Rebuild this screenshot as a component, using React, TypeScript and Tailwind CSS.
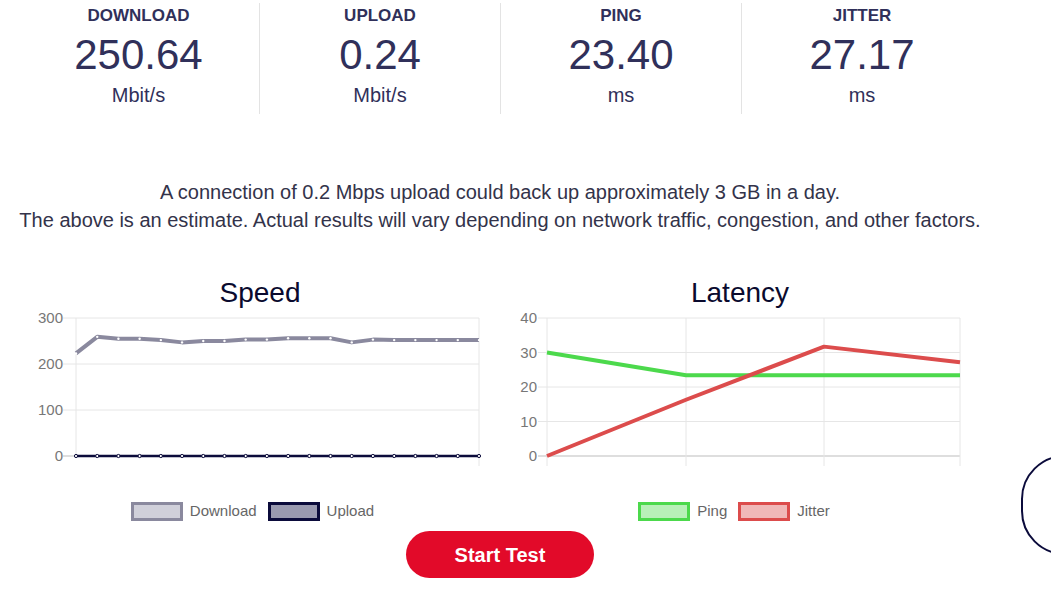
import React from "react";

const stats = [
  { label: "DOWNLOAD", value: "250.64", unit: "Mbit/s" },
  { label: "UPLOAD", value: "0.24", unit: "Mbit/s" },
  { label: "PING", value: "23.40", unit: "ms" },
  { label: "JITTER", value: "27.17", unit: "ms" },
];

const download = [223, 259, 255, 255, 252, 247, 250, 250, 253, 253, 256, 256, 256, 247, 253, 252, 252, 252, 252, 252];

function SpeedChart() {
  const left = 56;
  const right = 459;
  const step = (right - left) / (download.length - 1);
  const y = (v: number) => 146 - v * 0.46;
  const dl = download.map((v, i) => `${left + i * step},${y(v)}`).join(" ");
  const ul = download.map((_, i) => `${left + i * step},${y(0)}`).join(" ");
  return (
    <svg width="480" height="160" className="block">
      {[0, 100, 200, 300].map((t) => (
        <g key={t}>
          <line x1={43} x2={right} y1={y(t)} y2={y(t)} stroke={t === 0 ? "#bdbdbd" : "#e6e6e6"} strokeWidth="1" />
          <text x={43} y={y(t) + 5} textAnchor="end" fontSize="15" fill="#777" fontFamily="Liberation Sans, Arial, sans-serif">
            {t}
          </text>
        </g>
      ))}
      <line x1={left} x2={left} y1={8} y2={146} stroke="#e6e6e6" />
      <line x1={right} x2={right} y1={8} y2={156} stroke="#e6e6e6" />
      <polyline points={dl} fill="none" stroke="#8a899e" strokeWidth="4" strokeLinejoin="round" />
      {download.map((v, i) => (
        <circle key={i} cx={left + i * step} cy={y(v)} r="1.2" fill="#fff" />
      ))}
      <polyline points={ul} fill="none" stroke="#0b0b3b" strokeWidth="2.5" />
      {download.map((_, i) => (
        <circle key={i} cx={left + i * step} cy={y(0)} r="1.6" fill="#fff" stroke="#0b0b3b" strokeWidth="1" />
      ))}
    </svg>
  );
}

function LatencyChart() {
  const xs = [47, 186, 324, 460];
  const y = (v: number) => 146 - v * 3.45;
  const ping = [30, 23.4, 23.4, 23.4];
  const jitter = [0, 16.3, 31.7, 27.17];
  return (
    <svg width="480" height="160" className="block">
      {[0, 10, 20, 30, 40].map((t) => (
        <g key={t}>
          <line x1={38} x2={460} y1={y(t)} y2={y(t)} stroke={t === 0 ? "#bdbdbd" : "#e6e6e6"} strokeWidth="1" />
          <text x={37} y={y(t) + 5} textAnchor="end" fontSize="15" fill="#777" fontFamily="Liberation Sans, Arial, sans-serif">
            {t}
          </text>
        </g>
      ))}
      {xs.map((x) => (
        <line key={x} x1={x} x2={x} y1={8} y2={156} stroke="#e6e6e6" />
      ))}
      <polyline points={xs.map((x, i) => `${x},${y(ping[i])}`).join(" ")} fill="none" stroke="#4cd94c" strokeWidth="4" strokeLinejoin="round" />
      <polyline points={xs.map((x, i) => `${x},${y(jitter[i])}`).join(" ")} fill="none" stroke="#dc4c4c" strokeWidth="4" strokeLinejoin="round" />
    </svg>
  );
}

function Legend({ items }: { items: { label: string; border: string; fill: string }[] }) {
  return (
    <div className="flex items-center justify-center gap-[11px]">
      {items.map((it) => (
        <div key={it.label} className="flex items-center gap-[7px]">
          <span className="h-[19px] w-[52px] border-[3px]" style={{ borderColor: it.border, backgroundColor: it.fill }} />
          <span className="text-[15px] leading-5 text-[#666]">{it.label}</span>
        </div>
      ))}
    </div>
  );
}

export default function App() {
  return (
    <div className="relative h-[594px] w-full overflow-hidden bg-white font-['Liberation_Sans',Arial,sans-serif]">
      <div className="w-[1000px]">
        <div className="mt-[3px] grid grid-cols-4 px-[18px] text-[#30305a]">
          {stats.map((s, i) => (
            <div key={s.label} className={`flex h-[111px] flex-col items-center ${i > 0 ? "border-l border-[#e3e3e3]" : ""}`}>
              <div className="mt-[3px] text-[17px] font-bold leading-5">{s.label}</div>
              <div className="mt-[5px] text-[42px] leading-[48px]">{s.value}</div>
              <div className="mt-[4px] text-[20px] leading-6">{s.unit}</div>
            </div>
          ))}
        </div>

        <div className="mt-[64px] text-center text-[20px] leading-[28px] text-[#33334a]">
          <p>A connection of 0.2 Mbps upload could back up approximately 3 GB in a day.</p>
          <p>The above is an estimate. Actual results will vary depending on network traffic, congestion, and other factors.</p>
        </div>

        <div className="mt-[42px] flex px-[20px]">
          <div className="w-[480px]">
            <div className="text-center text-[28px] leading-[34px] text-[#0a0a2e]">Speed</div>
            <SpeedChart />
            <div className="mt-[31px] pr-[15px]">
              <Legend
                items={[
                  { label: "Download", border: "#8a899e", fill: "#d0d0da" },
                  { label: "Upload", border: "#0b0b3b", fill: "#9a9ab0" },
                ]}
              />
            </div>
          </div>
          <div className="w-[480px]">
            <div className="text-center text-[28px] leading-[34px] text-[#0a0a2e]">Latency</div>
            <LatencyChart />
            <div className="mt-[31px] pr-[12px]">
              <Legend
                items={[
                  { label: "Ping", border: "#4cd94c", fill: "#b8f0b8" },
                  { label: "Jitter", border: "#dc4c4c", fill: "#f0b8b8" },
                ]}
              />
            </div>
          </div>
        </div>

        <div className="mt-[10px] flex justify-center">
          <button type="button" className="h-[47px] w-[188px] rounded-full bg-[#e20a29] text-[20px] font-bold text-white">
            Start Test
          </button>
        </div>
      </div>

      <div className="absolute left-[1021px] top-[455px] h-[100px] w-[110px] rounded-[44px] border-2 border-[#0b0b3b]" />
    </div>
  );
}
